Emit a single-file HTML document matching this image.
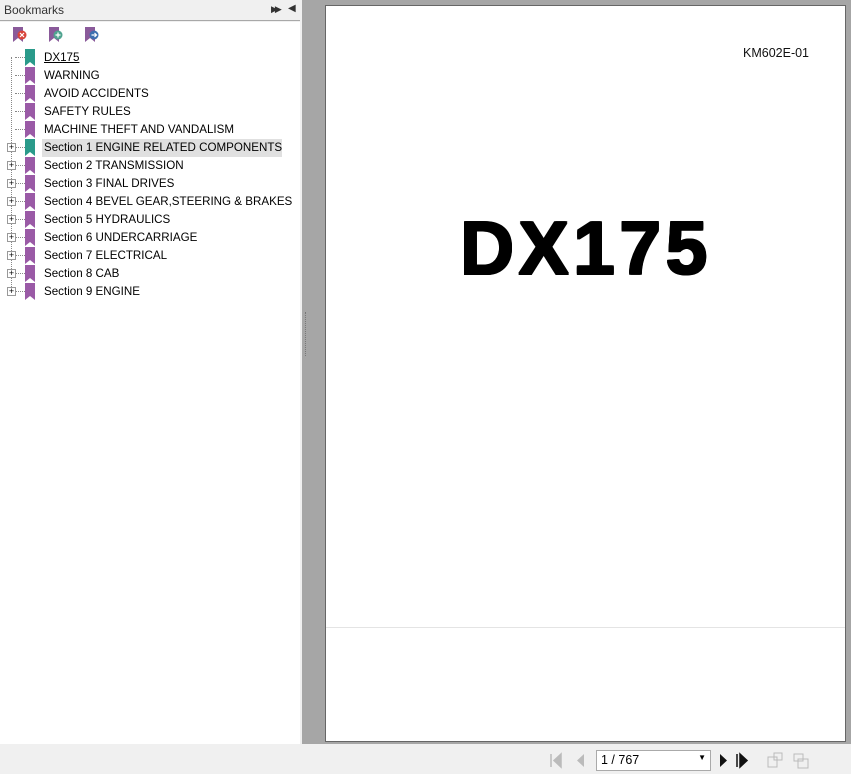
<!DOCTYPE html>
<html><head><meta charset="utf-8"><style>
*{margin:0;padding:0;box-sizing:border-box}
body{width:851px;height:774px;overflow:hidden;background:#f0f0f0;font-family:"Liberation Sans",sans-serif;position:relative}
.abs{position:absolute}
#hdr{left:0;top:0;width:300px;height:21px;background:#f0f0f0;border-bottom:1px solid #a8a8a8;font-size:12px;color:#333;padding:3px 0 0 4px}
#left{left:0;top:22px;width:300px;height:722px;background:#fff}
#gray{left:302px;top:0;width:549px;height:744px;background:#a6a6a6}
#page{left:325px;top:5px;width:521px;height:737px;background:#fff;border:1px solid #666}
.row{position:absolute;left:44px;font-size:11.6px;color:#000;height:17px;line-height:18px;white-space:nowrap}
.bm{position:absolute;left:25px;width:10px;height:17px}
.dot{position:absolute;border-top:1px dotted #888;width:10px;left:15px}
.plus{position:absolute;left:7px;width:9px;height:9px;border:1px solid #999;background:#fff;font-size:9px;line-height:7px;text-align:center;color:#000}
.big{text-shadow:1px 0 #000,-1px 0 #000,0 1px #000,0 -1px #000,1px 1px #000,-1px -1px #000,1px -1px #000,-1px 1px #000}
</style></head><body>
<div id="hdr" class="abs">Bookmarks
<span class="abs" style="left:271px;top:4px;font-size:9px;letter-spacing:-3px">▶▶</span>
<span class="abs" style="left:288px;top:3px;font-size:10px">◀</span></div>
<div id="left" class="abs">
<svg class="abs" style="left:10px;top:4px" width="90" height="18">
<g><path d="M3 1h10v15l-5-4-5 4z" fill="#8a5a9a"/><circle cx="12" cy="9" r="4.5" fill="#d9443a"/><path d="M10 7l4 4M14 7l-4 4" stroke="#fff" stroke-width="1.2"/></g>
<g transform="translate(36 0)"><path d="M3 1h10v15l-5-4-5 4z" fill="#8a5a9a"/><circle cx="12" cy="9" r="4.5" fill="#4fa38f"/><path d="M12 6.5v5M9.5 9h5" stroke="#fff" stroke-width="1.2"/></g>
<g transform="translate(72 0)"><path d="M3 1h10v15l-5-4-5 4z" fill="#8a5a9a"/><circle cx="12" cy="9" r="4.5" fill="#3d6fb0"/><path d="M9.5 9h5M12.5 7l2 2-2 2" stroke="#fff" stroke-width="1.2" fill="none"/></g>
</svg>
<div class="abs" style="left:11px;top:35px;height:234px;border-left:1px dotted #888"></div>
</div>
<div id="gray" class="abs"></div>
<div class="abs" style="left:305px;top:312px;width:3px;height:44px;border-left:1px dotted #777"></div>
<div id="page" class="abs">
<div class="abs" style="left:417px;top:40px;font-size:12.5px;color:#111">KM602E-01</div>
<div class="abs big" style="left:134px;top:197px;font-size:75px;font-weight:bold;letter-spacing:4.5px;line-height:90px">DX175</div>
<div class="abs" style="left:0;top:621px;width:519px;height:1px;background:#e4e4e4"></div>
</div>

<div class="abs" style="left:42px;top:139px;width:240px;height:18px;background:#e0e0e0"></div>

<div class="abs" style="left:0;top:0">
<div class="dot" style="top:57px"></div><svg class="bm" style="top:49px" viewBox="0 0 10 17"><path d="M0 0h10v17l-5-4-5 4z" fill="#2a9a8a"/></svg><div class="row" style="top:49px;text-decoration:underline">DX175</div>
<div class="dot" style="top:75px"></div><svg class="bm" style="top:67px" viewBox="0 0 10 17"><path d="M0 0h10v17l-5-4-5 4z" fill="#9a5aa6"/></svg><div class="row" style="top:67px">WARNING</div>
<div class="dot" style="top:93px"></div><svg class="bm" style="top:85px" viewBox="0 0 10 17"><path d="M0 0h10v17l-5-4-5 4z" fill="#9a5aa6"/></svg><div class="row" style="top:85px">AVOID ACCIDENTS</div>
<div class="dot" style="top:111px"></div><svg class="bm" style="top:103px" viewBox="0 0 10 17"><path d="M0 0h10v17l-5-4-5 4z" fill="#9a5aa6"/></svg><div class="row" style="top:103px">SAFETY RULES</div>
<div class="dot" style="top:129px"></div><svg class="bm" style="top:121px" viewBox="0 0 10 17"><path d="M0 0h10v17l-5-4-5 4z" fill="#9a5aa6"/></svg><div class="row" style="top:121px">MACHINE THEFT AND VANDALISM</div>
<div class="dot" style="top:147px"></div><div class="plus" style="top:143px">+</div><svg class="bm" style="top:139px" viewBox="0 0 10 17"><path d="M0 0h10v17l-5-4-5 4z" fill="#2a9a8a"/></svg><div class="row" style="top:139px">Section 1 ENGINE RELATED COMPONENTS</div>
<div class="dot" style="top:165px"></div><div class="plus" style="top:161px">+</div><svg class="bm" style="top:157px" viewBox="0 0 10 17"><path d="M0 0h10v17l-5-4-5 4z" fill="#9a5aa6"/></svg><div class="row" style="top:157px">Section 2 TRANSMISSION</div>
<div class="dot" style="top:183px"></div><div class="plus" style="top:179px">+</div><svg class="bm" style="top:175px" viewBox="0 0 10 17"><path d="M0 0h10v17l-5-4-5 4z" fill="#9a5aa6"/></svg><div class="row" style="top:175px">Section 3 FINAL DRIVES</div>
<div class="dot" style="top:201px"></div><div class="plus" style="top:197px">+</div><svg class="bm" style="top:193px" viewBox="0 0 10 17"><path d="M0 0h10v17l-5-4-5 4z" fill="#9a5aa6"/></svg><div class="row" style="top:193px">Section 4 BEVEL GEAR,STEERING &amp; BRAKES</div>
<div class="dot" style="top:219px"></div><div class="plus" style="top:215px">+</div><svg class="bm" style="top:211px" viewBox="0 0 10 17"><path d="M0 0h10v17l-5-4-5 4z" fill="#9a5aa6"/></svg><div class="row" style="top:211px">Section 5 HYDRAULICS</div>
<div class="dot" style="top:237px"></div><div class="plus" style="top:233px">+</div><svg class="bm" style="top:229px" viewBox="0 0 10 17"><path d="M0 0h10v17l-5-4-5 4z" fill="#9a5aa6"/></svg><div class="row" style="top:229px">Section 6 UNDERCARRIAGE</div>
<div class="dot" style="top:255px"></div><div class="plus" style="top:251px">+</div><svg class="bm" style="top:247px" viewBox="0 0 10 17"><path d="M0 0h10v17l-5-4-5 4z" fill="#9a5aa6"/></svg><div class="row" style="top:247px">Section 7 ELECTRICAL</div>
<div class="dot" style="top:273px"></div><div class="plus" style="top:269px">+</div><svg class="bm" style="top:265px" viewBox="0 0 10 17"><path d="M0 0h10v17l-5-4-5 4z" fill="#9a5aa6"/></svg><div class="row" style="top:265px">Section 8 CAB</div>
<div class="dot" style="top:291px"></div><div class="plus" style="top:287px">+</div><svg class="bm" style="top:283px" viewBox="0 0 10 17"><path d="M0 0h10v17l-5-4-5 4z" fill="#9a5aa6"/></svg><div class="row" style="top:283px">Section 9 ENGINE</div>
</div>

<svg class="abs" style="left:548px;top:752px" width="70" height="18">
<path d="M3 2v13M13 2l-7 6.5 7 6.5z" fill="#bbb" stroke="#bbb" stroke-width="1.5"/>
<path d="M36 2l-7 6.5 7 6.5z" fill="#bbb"/>
</svg>
<div class="abs" style="left:596px;top:750px;width:115px;height:21px;background:#fff;border:1px solid #aaa;font-size:12.5px;padding:2px 0 0 4px">1 / 767<span class="abs" style="right:4px;top:2px;font-size:8px">▼</span></div>
<svg class="abs" style="left:715px;top:752px" width="100" height="18">
<path d="M5 2l7 6.5-7 6.5z" fill="#111"/>
<path d="M25 2l7 6.5-7 6.5zM22 2v13" fill="#111" stroke="#111" stroke-width="1.5"/>
<rect x="53" y="5" width="9" height="10" fill="none" stroke="#bbb"/><rect x="59" y="1" width="8" height="7" fill="none" stroke="#bbb"/>
<rect x="79" y="2" width="9" height="7" fill="none" stroke="#bbb"/><rect x="83" y="7" width="10" height="9" fill="none" stroke="#bbb"/>
</svg>
</body></html>
